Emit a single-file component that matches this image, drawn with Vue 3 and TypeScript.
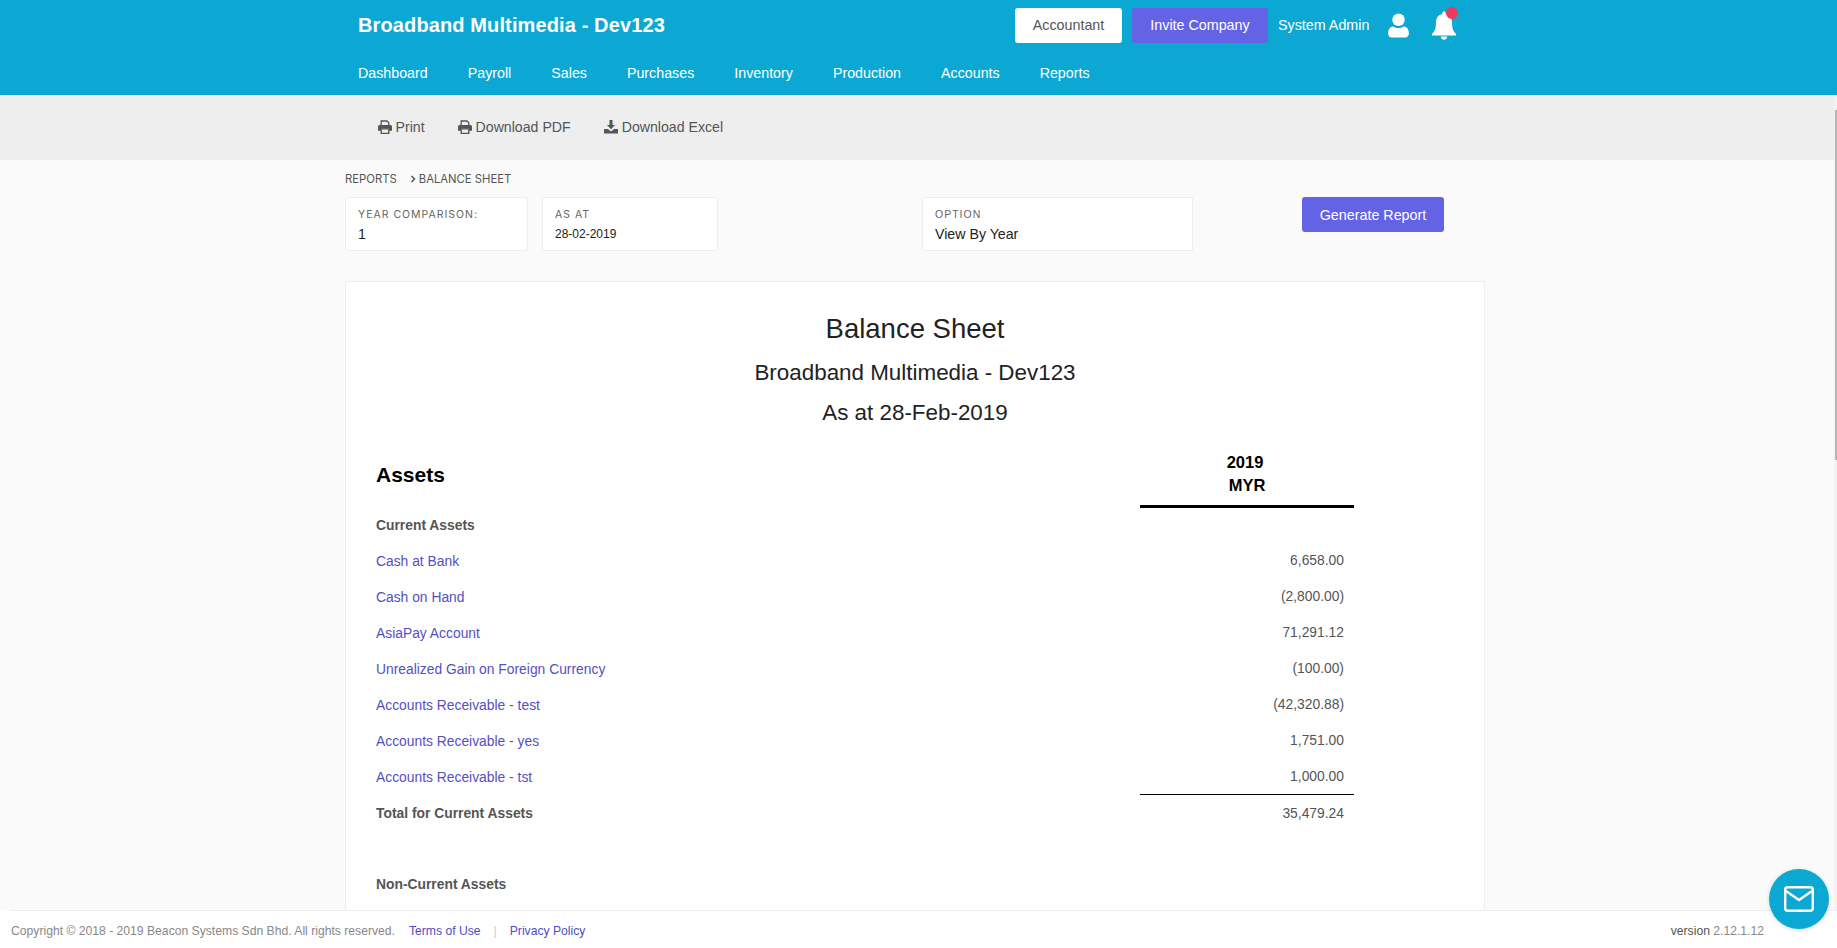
<script setup lang="ts">
interface Row {
  label: string
  value: string
  kind?: 'head' | 'total'
}

const menu = ['Dashboard', 'Payroll', 'Sales', 'Purchases', 'Inventory', 'Production', 'Accounts', 'Reports']

const rows: Row[] = [
  { label: 'Current Assets', value: '', kind: 'head' },
  { label: 'Cash at Bank', value: '6,658.00' },
  { label: 'Cash on Hand', value: '(2,800.00)' },
  { label: 'AsiaPay Account', value: '71,291.12' },
  { label: 'Unrealized Gain on Foreign Currency', value: '(100.00)' },
  { label: 'Accounts Receivable - test', value: '(42,320.88)' },
  { label: 'Accounts Receivable - yes', value: '1,751.00' },
  { label: 'Accounts Receivable - tst', value: '1,000.00' },
  { label: 'Total for Current Assets', value: '35,479.24', kind: 'total' }
]
</script>

<template>
  <div class="page">
    <header class="topbar">
      <div class="topbar-main">
        <div class="brand">Broadband Multimedia - Dev123</div>
        <div class="top-actions">
          <button class="btn btn-white">Accountant</button>
          <button class="btn btn-purple">Invite Company</button>
          <span class="user-name">System Admin</span>
          <svg class="user-icon" viewBox="0 0 20 24" fill="#fff">
            <circle cx="10" cy="6.5" r="6" />
            <path d="M0 19.5C0 15.5 2.5 13 5 13c1.5 1 3.3 1.600 5 1.600S13.500 14 15 13c2.500 0 5 2.500 5 6.500 0 2.500-1.500 4-3.500 4h-13C1.500 23.500 0 22 0 19.500z" />
          </svg>
          <span class="bell-wrap">
            <svg class="bell-icon" viewBox="0 0 26 30" fill="#fff">
              <path d="M13 1.500c-1 0-1.700.7-1.700 1.700v.7C7.500 4.700 5 8 5 12c0 6-1 9-4 12v1.500h24V24c-3-3-4-6-4-12 0-4-2.500-7.300-6.300-8.100v-.7c0-1-.7-1.700-1.700-1.700z" />
              <path d="M9.800 26.500c0 1.900 1.400 3.200 3.200 3.200s3.200-1.300 3.200-3.200z" />
            </svg>
            <span class="bell-dot"></span>
          </span>
        </div>
      </div>
      <nav class="menu">
        <a v-for="item in menu" :key="item">{{ item }}</a>
      </nav>
    </header>

    <div class="toolbar">
      <span class="tool">
        <svg class="tool-icon" viewBox="0 0 14 14">
          <path d="M3.200 5.500V1h5.800l1.800 1.800v2.700" fill="none" stroke="#555" stroke-width="1.300" />
          <path d="M1.500 5h11A1.500 1.500 0 0 1 14 6.500v4.300h-3V8.500H3v2.300H0V6.500A1.500 1.500 0 0 1 1.500 5z" fill="#555" />
          <path d="M3.200 8.800h7.600v4.500H3.200z" fill="none" stroke="#555" stroke-width="1.300" />
        </svg>
        Print
      </span>
      <span class="tool">
        <svg class="tool-icon" viewBox="0 0 14 14">
          <path d="M3.200 5.500V1h5.800l1.800 1.800v2.700" fill="none" stroke="#555" stroke-width="1.300" />
          <path d="M1.500 5h11A1.500 1.500 0 0 1 14 6.500v4.300h-3V8.500H3v2.300H0V6.500A1.500 1.500 0 0 1 1.500 5z" fill="#555" />
          <path d="M3.200 8.800h7.600v4.500H3.200z" fill="none" stroke="#555" stroke-width="1.300" />
        </svg>
        Download PDF
      </span>
      <span class="tool">
        <svg class="tool-icon" viewBox="0 0 14 14"><path d="M5.500 0h3v5H11L7 9.300 3 5h2.500z" fill="#555" /><path d="M0 9h3.800L7 11.500 10.200 9H14v4.500H0z" fill="#555" /></svg>
        Download Excel
      </span>
    </div>

    <main class="content">
      <div class="wrap">
        <div class="crumbs">
          <span>REPORTS</span>
          <svg class="crumb-arrow" viewBox="0 0 6 8"><path d="M1.500 1l3 3-3 3" fill="none" stroke="#555" stroke-width="1.500" /></svg>
          <span class="crumb-last">BALANCE SHEET</span>
        </div>

        <div class="filters">
          <div class="field field-year">
            <label>YEAR COMPARISON:</label>
            <div class="field-value">1</div>
          </div>
          <div class="field field-date">
            <label>AS AT</label>
            <div class="field-value small">28-02-2019</div>
          </div>
          <div class="field field-option">
            <label class="plain">OPTION</label>
            <div class="field-value">View By Year</div>
          </div>
          <button class="btn btn-purple btn-generate">Generate Report</button>
        </div>

        <section class="sheet">
          <h1>Balance Sheet</h1>
          <h2>Broadband Multimedia - Dev123</h2>
          <h3>As at 28-Feb-2019</h3>

          <div class="sheet-head">
            <div class="sheet-title">Assets</div>
            <div class="year-col"><span class="year">2019</span><br />MYR</div>
          </div>

          <div v-for="row in rows" :key="row.label" class="row" :class="row.kind">
            <a class="row-label">{{ row.label }}</a>
            <div class="row-value">{{ row.value }}</div>
          </div>

          <div class="row head non-current">
            <a class="row-label">Non-Current Assets</a>
            <div class="row-value"></div>
          </div>
        </section>
      </div>
    </main>

    <footer class="footer">
      <div class="footer-inner">
        <div>
          <span class="copy">Copyright © 2018 - 2019 Beacon Systems Sdn Bhd. All rights reserved.</span>
          <a>Terms of Use</a>
          <span class="sep">|</span>
          <a>Privacy Policy</a>
        </div>
        <div class="version">version <span>2.12.1.12</span></div>
      </div>
    </footer>

    <div class="scroll-track"></div>
    <div class="scroll-thumb"></div>

    <div class="fab">
      <svg viewBox="0 0 30 26" width="30" height="26">
        <rect x="1.200" y="1.200" width="27.600" height="23.600" rx="2.500" fill="none" stroke="#fff" stroke-width="2.400" />
        <path d="M2 5l13 9 13-9" fill="none" stroke="#fff" stroke-width="2.400" />
      </svg>
    </div>
  </div>
</template>

<style>
html,
body {
  margin: 0;
  overflow: hidden;
}
</style>

<style scoped>
.page {
  position: relative;
  height: 948px;
  display: flex;
  flex-direction: column;
  overflow: hidden;
  background: #fafafa;
  font-family: "Liberation Sans", Arial, sans-serif;
  color: #555;
}

.topbar {
  height: 95px;
  flex: none;
  box-sizing: border-box;
  padding-left: 358px;
  background: #0ca8d4;
  color: #fff;
}
.topbar-main {
  height: 50px;
  display: flex;
  align-items: center;
}
.brand {
  width: 657px;
  padding-top: 1px;
  font-size: 20px;
  font-weight: 700;
  letter-spacing: 0.12px;
}
.top-actions {
  display: flex;
  align-items: center;
}
.btn {
  border: 0;
  border-radius: 3px;
  height: 35px;
  font-family: inherit;
  font-size: 14.3px;
  padding: 0;
}
.btn-white {
  width: 107px;
  background: #fff;
  color: #555;
  margin-right: 10px;
}
.btn-purple {
  width: 136px;
  background: #6463e6;
  color: #fff;
}
.user-name {
  margin-left: 10px;
  font-size: 14.3px;
  width: 92px;
}
.user-icon {
  width: 21px;
  height: 25px;
  margin-left: 18px;
}
.bell-wrap {
  position: relative;
  display: block;
  width: 26px;
  height: 30px;
  margin-left: 22px;
}
.bell-icon {
  display: block;
  width: 26px;
  height: 30px;
}
.bell-dot {
  position: absolute;
  top: -3px;
  right: -1px;
  width: 12px;
  height: 12px;
  border-radius: 50%;
  background: #f0395a;
}
.menu {
  display: flex;
  gap: 40px;
  font-size: 14.25px;
  line-height: 46px;
}

.toolbar {
  height: 65px;
  flex: none;
  box-sizing: border-box;
  display: flex;
  align-items: center;
  gap: 33.5px;
  padding: 0 0 2px 378px;
  background: #eee;
  font-size: 14.15px;
}
.tool {
  display: flex;
  align-items: center;
  gap: 4px;
  color: #555;
}
.tool-icon {
  width: 14px;
  height: 14px;
  margin-right: -0.5px;
}

.content {
  flex: 1;
  min-height: 0;
  overflow: hidden;
}
.wrap {
  width: 1140px;
  margin-left: 345px;
}
.crumbs {
  display: flex;
  align-items: center;
  height: 37px;
  font-family: Inter, sans-serif;
  font-size: 11.3px;
  color: #555;
}
.crumb-arrow {
  width: 6px;
  height: 8px;
  margin: 1px 3px 0 13px;
}
.crumb-last {
  padding-top: 1px;
}
.filters {
  display: flex;
  align-items: flex-start;
}
.field {
  box-sizing: border-box;
  height: 54px;
  padding: 10px 12px;
  background: #fff;
  border: 1px solid #eee;
  border-radius: 2px;
}
.field label {
  display: block;
  font-family: Inter, sans-serif;
  font-size: 10.5px;
  line-height: 14px;
  letter-spacing: 1px;
  color: #666;
}
.field label.plain {
  margin-top: -1px;
  padding-bottom: 1px;
  font-family: "Liberation Sans", Arial, sans-serif;
}
.field-value {
  margin-top: 3px;
  font-size: 14.2px;
  line-height: 18px;
  color: #222;
}
.field-value.small {
  font-size: 12px;
}
.field-year {
  width: 183px;
}
.field-date {
  width: 176px;
  margin-left: 14px;
}
.field-option {
  width: 271px;
  margin-left: 204px;
}
.btn-generate {
  width: 142px;
  margin-left: 109px;
}

.sheet {
  box-sizing: border-box;
  margin-top: 30px;
  height: 700px;
  padding: 0 30px;
  background: #fff;
  border: 1px solid #eee;
  color: #222;
}
.sheet h1,
.sheet h2,
.sheet h3 {
  margin: 0;
  font-weight: 400;
  text-align: center;
  color: #222;
}
.sheet h1 {
  margin-top: 31px;
  font-size: 27.5px;
  line-height: 32px;
}
.sheet h2 {
  margin-top: 13px;
  font-size: 22.4px;
  line-height: 30px;
}
.sheet h3 {
  margin-top: 10px;
  font-size: 22.4px;
  line-height: 30px;
}
.sheet-head {
  display: flex;
  justify-content: space-between;
  width: 978px;
  margin: 22px 0 -2px;
}
.sheet-title {
  align-self: center;
  padding-bottom: 8px;
  font-size: 21px;
  font-weight: 700;
  color: #000;
}
.year-col {
  width: 214px;
  height: 58px;
  box-sizing: border-box;
  padding-top: 1px;
  border-bottom: 3px solid #000;
  font-size: 16.5px;
  font-weight: 700;
  line-height: 23px;
  text-align: center;
  color: #000;
}
.year {
  padding-right: 4px;
}
.row {
  display: flex;
  justify-content: space-between;
  align-items: center;
  width: 978px;
  height: 36px;
  font-size: 13.85px;
}
.row-label {
  padding-top: 1px;
  color: #5450c4;
}
.row-value {
  box-sizing: border-box;
  width: 214px;
  height: 36px;
  padding-right: 10px;
  line-height: 36px;
  text-align: right;
  color: #555;
}
.row.head .row-label,
.row.total .row-label {
  color: #555;
  font-weight: 700;
}
.row.total .row-value {
  border-top: 1px solid #000;
}
.row.non-current {
  margin-top: 35px;
}

.footer {
  flex: none;
  height: 38px;
  padding-left: 10px;
  background: #fff;
}
.footer-inner {
  box-sizing: border-box;
  height: 38px;
  display: flex;
  justify-content: space-between;
  align-items: center;
  padding: 2px 73px 0 1px;
  border-top: 1px solid #eee;
  font-size: 12.17px;
  color: #888;
}
.footer-inner a {
  color: #4f4cc9;
}
.copy {
  margin-right: 14px;
}
.sep {
  margin: 0 13px;
  color: #ccc;
}
.version {
  color: #555;
}
.version span {
  color: #888;
}

.scroll-track {
  position: absolute;
  top: 95px;
  right: 0;
  width: 3px;
  height: 815px;
  background: #f3f3f3;
}
.scroll-thumb {
  position: absolute;
  top: 110px;
  right: 0;
  width: 2px;
  height: 350px;
  background: #b5b5b5;
}
.fab {
  position: absolute;
  right: 8px;
  bottom: 19px;
  width: 60px;
  height: 60px;
  display: flex;
  align-items: center;
  justify-content: center;
  border-radius: 50%;
  background: #0ca8d4;
  box-shadow: 0 1px 4px rgba(0, 0, 0, 0.15);
}
</style>
